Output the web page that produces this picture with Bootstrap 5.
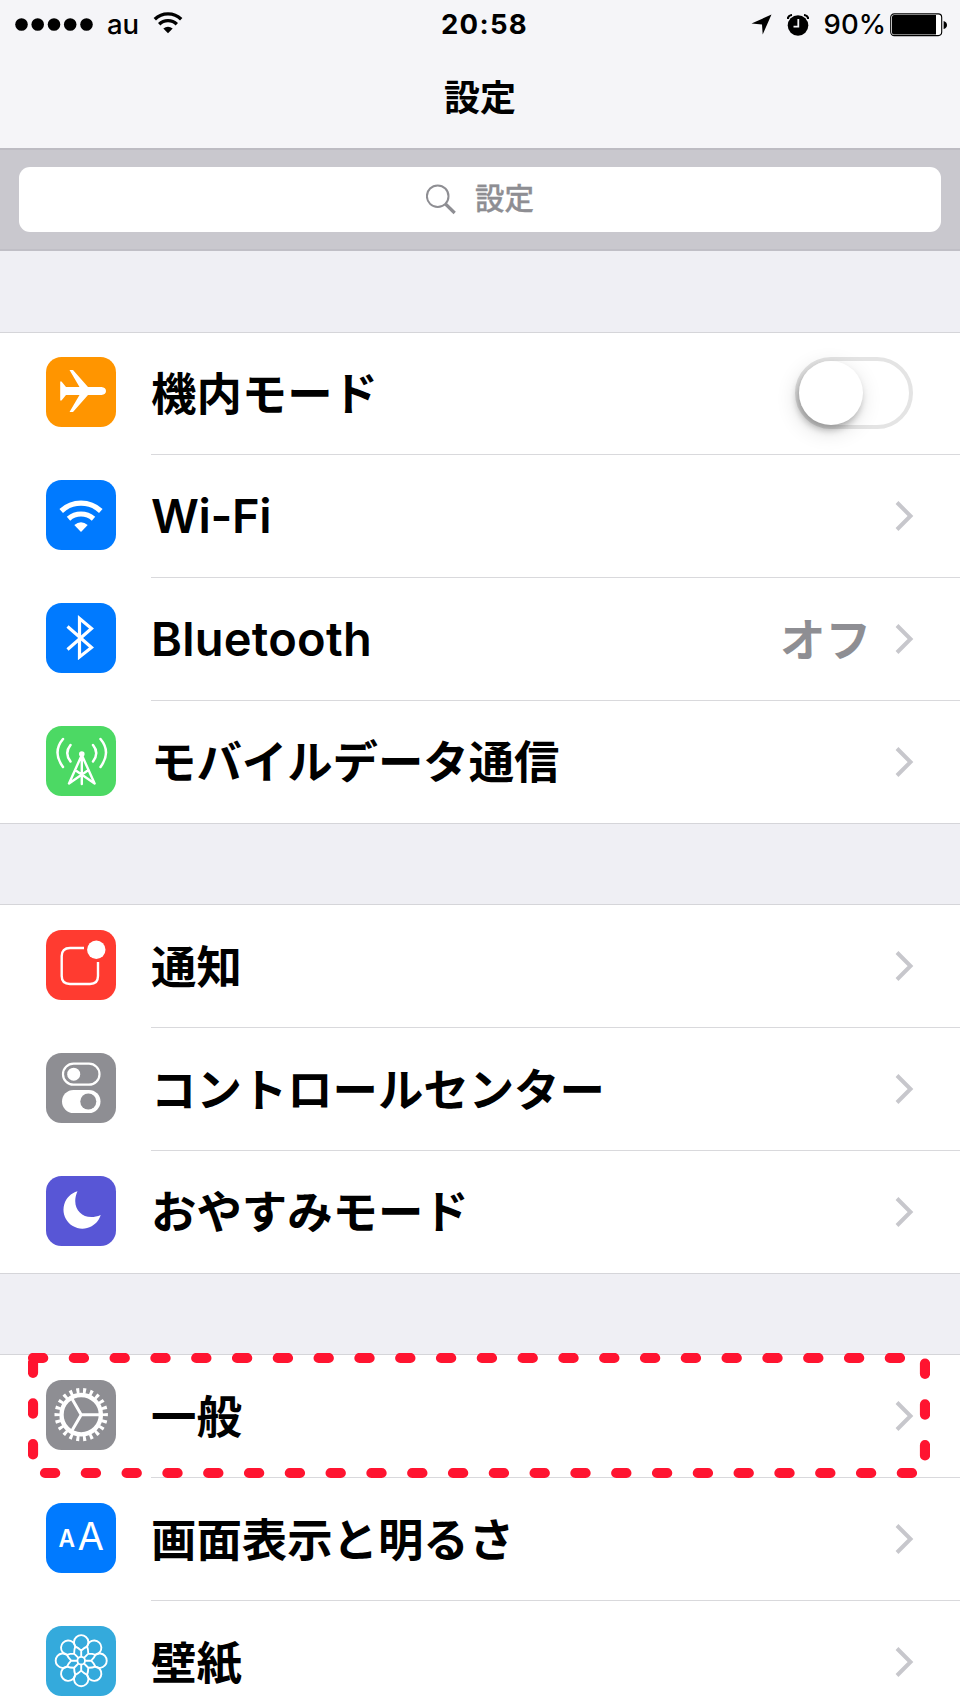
<!DOCTYPE html>
<html lang="ja">
<head>
<meta charset="utf-8">
<meta name="viewport" content="width=device-width, initial-scale=1">
<title>設定</title>
<link href="https://cdn.jsdelivr.net/npm/bootstrap@5.3.0/dist/css/bootstrap.min.css" rel="stylesheet">
<style>
  body { background: #efeff4; color: #000; font-family: Inter, "Noto Sans CJK JP", sans-serif; line-height: 1; height: 1707px; overflow: hidden; }
  svg { display: block; flex: none; }
  .top-area { background: #f5f5f8; height: 148px; }
  .status-row { display: grid; grid-template-columns: 441px 86px 1fr; height: 49px; font-size: 27.5px; font-weight: 500; }
  .status-left { padding-left: 15px; gap: 14px; }
  .status-right { padding-right: 13px; gap: 15px; }
  .clock { font-weight: 700; letter-spacing: 1.3px; white-space: nowrap; }
  .page-title { font-size: 36px; font-weight: 700; height: 99px; padding-top: 28px; }
  .search-wrap { background: #c9c8ce; height: 103px; border-top: 2px solid #bdbcc3; border-bottom: 2px solid #c0bfc6; padding: 17px 19px 0; }
  .search-box { height: 65px; border-radius: 11px; color: #8e8e93; font-size: 29.5px; font-weight: 500; gap: 19px; }
  .search-box span { -webkit-text-stroke: .3px #8e8e93; padding-bottom: 2px; }
  .gap-band { height: 80px; }
  .gap-band.first { height: 81px; }
  .settings-group { border-top: 1px solid #d5d5d9; background: #fff; }
  .settings-row { height: 123px; padding-left: 46px; border: 0; }
  .settings-row.h-short { height: 122px; }
  .tile { width: 70px; height: 70px; border-radius: 15.5px; margin: 25px 35px 0 0; flex: none; }
  .h-first .tile { margin-top: 24px; }
  .row-main { border-bottom: 1px solid #d9d9dc; padding-right: 46px; }
  .row-label { font-size: 45.4px; font-weight: 600; padding-top: 3px; white-space: nowrap; }
  .row-label.latin { font-size: 47px; font-weight: 600; padding-top: 0; padding-bottom: 2px; letter-spacing: -.4px; }
  .row-label.latin.spaced { letter-spacing: .25px; }
  .row-value { font-size: 45.5px; font-weight: 600; color: #8e8e93; margin-right: 24px; padding-top: 4px; }
  .settings-group > :last-child .row-main { border-bottom-color: transparent; }
  .settings-group.closed { border-bottom: 1px solid #d5d5d9; }
  .toggle { width: 118px; height: 72px; border: 4px solid #e4e4e4; border-radius: 36px; margin: 0 1px 2px 0; }
  .knob { width: 64px; height: 64px; border-radius: 50%; background: #fff; box-shadow: -2px 5px 7px rgba(0,0,0,.26), -2px 6px 22px rgba(0,0,0,.14); }
  .highlight { left: 28px; top: -2px; z-index: 2; }
</style>
</head>
<body>
<svg width="0" height="0" class="position-absolute" aria-hidden="true">
  <defs>
    <symbol id="chev" viewBox="0 0 19 32"><path d="M2 2.5 15.5 16 2 29.5" fill="none" stroke="#c7c7cc" stroke-width="4"/></symbol>
  </defs>
</svg>

<header class="top-area">
  <div class="status-row align-items-center">
    <div class="status-left d-flex align-items-center">
      <svg width="78" height="14" viewBox="0 0 78 14"><circle cx="6.500" cy="6.500" r="6.300"/><circle cx="22.700" cy="6.500" r="6.300"/><circle cx="39" cy="6.500" r="6.300"/><circle cx="55.200" cy="6.500" r="6.300"/><circle cx="71.500" cy="6.500" r="6.300"/></svg>
      <span>au</span>
      <svg width="30" height="22" viewBox="0 0 30 22" class="mb-1"><g fill="none" stroke="#000"><path d="M1.800 7.200A19 19 0 0 1 28.200 7.200" stroke-width="3.400"/><path d="M6.200 12.200A12.500 12.500 0 0 1 23.800 12.200" stroke-width="3.400"/></g><path d="M15 21.300 10.300 16.500Q15 12.800 19.700 16.500Z"/></svg>
    </div>
    <div class="clock">20:58</div>
    <div class="status-right d-flex align-items-center justify-content-end">
      <svg width="21" height="22" viewBox="0 0 21 22"><path d="M20.500.5 11.700 20.500 11 10.500.5 9.500Z"/></svg>
      <svg width="22" height="22" viewBox="0 0 22 22"><circle cx="11" cy="11.500" r="10.300"/><path d="M.8 5Q1 1.500 5 1M21.200 5Q21 1.500 17 1" fill="none" stroke="#000" stroke-width="2.200"/><path d="M11.300 5V12.700H6.500" fill="none" stroke="#f5f5f8" stroke-width="1.800"/></svg>
      <div class="d-flex align-items-center gap-1">
        <span>90%</span>
        <svg width="57" height="24" viewBox="0 0 57 24"><rect x=".7" y=".9" width="51" height="21.700" rx="3.500" fill="#fff" stroke="#000" stroke-width="1.100"/><path d="M4 2H46V21.500H4Q2 21.500 2 19.500V4Q2 2 4 2Z"/><path d="M53.600 8Q57 9 57 12T53.600 16Z"/></svg>
      </div>
    </div>
  </div>
  <h1 class="page-title text-center m-0">設定</h1>
</header>

<div class="search-wrap">
  <div class="search-box bg-white d-flex align-items-center justify-content-center">
    <svg width="30" height="31" viewBox="0 0 30 31"><circle cx="11.700" cy="12.200" r="10.800" fill="none" stroke="#8e8e93" stroke-width="2"/><path d="M19.500 20 28.700 29" stroke="#8e8e93" stroke-width="3.200"/></svg>
    <span>設定</span>
  </div>
</div>

<div class="gap-band first"></div>
<main>
<section class="settings-group closed list-group list-group-flush rounded-0">
  <div class="settings-row h-short h-first d-flex">
    <svg class="tile" viewBox="0 0 70 70" style="background:#ff9500"><path fill="#fff" d="M14.200 24.500H15.500L20 30H33.500L23.500 13H27L42 30H55.500Q60 30.500 60 34T55.500 38H42L27 55H23.500L33.500 38H20L15.500 43.500H14.200Z"/></svg>
    <div class="row-main d-flex flex-fill align-items-center justify-content-between"><span class="row-label">機内モード</span><div class="toggle"><div class="knob"></div></div></div>
  </div>
  <div class="settings-row d-flex">
    <svg class="tile" viewBox="0 0 70 70" style="background:#007aff"><g fill="none" stroke="#fff" stroke-width="5.200"><path d="M15.200 31A29 29 0 0 1 54.800 31"/><path d="M22.500 38.700A19 19 0 0 1 47.500 38.700"/></g><path fill="#fff" d="M35 52 28.300 45Q35 39.700 41.700 45Z"/></svg>
    <div class="row-main d-flex flex-fill align-items-center justify-content-between"><span class="row-label latin">Wi-Fi</span><svg width="19" height="32"><use href="#chev"/></svg></div>
  </div>
  <div class="settings-row d-flex">
    <svg class="tile" viewBox="0 0 70 70" style="background:#007aff"><path fill="none" stroke="#fff" stroke-width="3.200" d="M21.500 23.500 45.500 44.500 33.500 54V15.500L45.500 25.500 21.500 46.500"/></svg>
    <div class="row-main d-flex flex-fill align-items-center"><span class="row-label latin spaced me-auto">Bluetooth</span><span class="row-value">オフ</span><svg width="19" height="32"><use href="#chev"/></svg></div>
  </div>
  <div class="settings-row h-short d-flex">
    <svg class="tile" viewBox="0 0 70 70" style="background:#4cd964"><g fill="none" stroke="#fff" stroke-width="2.500" stroke-linecap="round"><path d="M17 13Q6 26 17 41M54.500 13Q65.500 26 54.500 41M24.500 19Q18 27 24.500 35.500M47 19Q53.500 27 47 35.500"/><path stroke-linejoin="round" stroke-width="2.400" d="M35.800 28V58M35.800 29 23 57.500 41 45M35.800 29 48.600 57.500 30.500 45"/></g><circle cx="35.800" cy="28" r="2.800" fill="#fff"/></svg>
    <div class="row-main d-flex flex-fill align-items-center justify-content-between"><span class="row-label">モバイルデータ通信</span><svg width="19" height="32"><use href="#chev"/></svg></div>
  </div>
</section>

<div class="gap-band"></div>
<section class="settings-group closed list-group list-group-flush rounded-0">
  <div class="settings-row d-flex">
    <svg class="tile" viewBox="0 0 70 70" style="background:#ff3b30"><path fill="none" stroke="#fff" stroke-width="2.400" d="M38 18H24Q15.700 18 15.700 26V46Q15.700 54 24 54H44Q52 54 52 46V32"/><circle cx="50.300" cy="19.700" r="9.200" fill="#fff"/></svg>
    <div class="row-main d-flex flex-fill align-items-center justify-content-between"><span class="row-label">通知</span><svg width="19" height="32"><use href="#chev"/></svg></div>
  </div>
  <div class="settings-row d-flex">
    <svg class="tile" viewBox="0 0 70 70" style="background:#8e8e93"><rect x="17" y="10.700" width="36.500" height="21" rx="10.500" fill="none" stroke="#fff" stroke-width="2.200"/><circle cx="27.700" cy="21.200" r="6.500" fill="#fff"/><rect x="16" y="37" width="38.500" height="23" rx="11.500" fill="#fff"/><circle cx="42.300" cy="48.500" r="8" fill="#8e8e93"/></svg>
    <div class="row-main d-flex flex-fill align-items-center justify-content-between"><span class="row-label">コントロールセンター</span><svg width="19" height="32"><use href="#chev"/></svg></div>
  </div>
  <div class="settings-row h-short d-flex">
    <svg class="tile" viewBox="0 0 70 70" style="background:#5856d6"><path fill="#fff" d="M31.500 15.300A19 19 0 1 0 54.700 39C38 46.500 23.500 33 31.500 15.300Z"/></svg>
    <div class="row-main d-flex flex-fill align-items-center justify-content-between"><span class="row-label">おやすみモード</span><svg width="19" height="32"><use href="#chev"/></svg></div>
  </div>
</section>

<div class="gap-band"></div>
<section class="settings-group list-group list-group-flush rounded-0 position-relative">
  <div class="settings-row d-flex">
    <svg class="tile" viewBox="0 0 70 70" style="background:#8e8e93"><g fill="none" stroke="#fff"><circle cx="35.200" cy="34.700" r="19.700" stroke-width="4.400"/><circle cx="35.200" cy="34.700" r="24" stroke-width="5.400" pathLength="22" stroke-dasharray=".44 .56" stroke-dashoffset=".22"/><path stroke-width="3" d="M53 34.700H35.200L26 18.800M35.200 34.700 26 50.600"/></g></svg>
    <div class="row-main d-flex flex-fill align-items-center justify-content-between"><span class="row-label">一般</span><svg width="19" height="32"><use href="#chev"/></svg></div>
  </div>
  <div class="settings-row d-flex">
    <svg class="tile" viewBox="0 0 70 70" style="background:#007aff"><g fill="#fff" font-family="Inter, sans-serif"><text x="12.500" y="44" font-size="24.500" font-weight="600" textLength="16.500" lengthAdjust="spacingAndGlyphs">A</text><text x="31.500" y="47.300" font-size="37.500" font-weight="400" textLength="26.500" lengthAdjust="spacingAndGlyphs">A</text></g></svg>
    <div class="row-main d-flex flex-fill align-items-center justify-content-between"><span class="row-label">画面表示と明るさ</span><svg width="19" height="32"><use href="#chev"/></svg></div>
  </div>
  <div class="settings-row d-flex">
    <svg class="tile" viewBox="0 0 70 70" style="background:#34aadc">
      <defs><path id="petal" d="M0-4V-10M-5.900-14.200Q-3-13 0-10Q3-13 5.900-14.200M-5.900-14.200A7.200 7.200 0 1 1 5.900-14.200"/></defs>
      <g transform="translate(35.200 34.700)" fill="none" stroke="#fff" stroke-width="1.900"><circle r="3.800"/><use href="#petal"/><use href="#petal" transform="rotate(45)"/><use href="#petal" transform="rotate(90)"/><use href="#petal" transform="rotate(135)"/><use href="#petal" transform="rotate(180)"/><use href="#petal" transform="rotate(225)"/><use href="#petal" transform="rotate(270)"/><use href="#petal" transform="rotate(315)"/></g>
    </svg>
    <div class="row-main d-flex flex-fill align-items-center justify-content-between"><span class="row-label">壁紙</span><svg width="19" height="32"><use href="#chev"/></svg></div>
  </div>
  <svg class="highlight position-absolute" width="902" height="126" viewBox="0 0 902 126"><path d="M5 5H897V120H5Z" fill="none" stroke="#ff1430" stroke-width="10.200" stroke-linecap="round" stroke-dasharray="10.200 30.600"/></svg>
</section>
</main>
<script src="https://cdn.jsdelivr.net/npm/bootstrap@5.3.0/dist/js/bootstrap.bundle.min.js"></script>
</body>
</html>
